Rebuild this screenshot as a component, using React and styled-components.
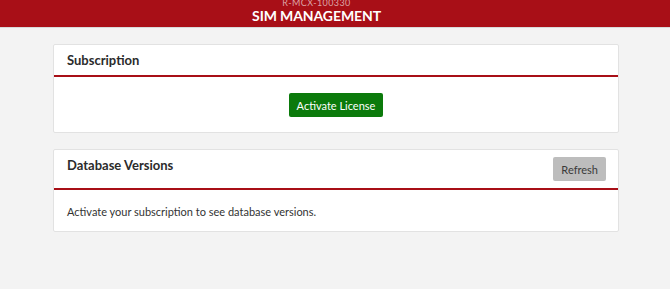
import React from 'react';
import styled, { createGlobalStyle } from 'styled-components';

const GlobalStyle = createGlobalStyle`
  body {
    margin: 0;
    background: #f3f3f3;
    font-family: Lato, 'Open Sans', sans-serif;
  }
`;

const TopBar = styled.header`
  height: 27px;
  padding-right: 37px;
  background: #a80f17;
  border-bottom: 1px solid #d9d9d9;
  display: flex;
  flex-direction: column;
  align-items: center;
  overflow: hidden;
  color: #fff;
`;

const DeviceId = styled.div`
  font-size: 9px;
  line-height: 9px;
  margin-top: -2px;
  color: #dca3a6;
  letter-spacing: 0.4px;
`;

const Title = styled.h1`
  margin: 0;
  font-size: 14px;
  line-height: 15px;
  font-weight: 700;
  margin-top: 1px;
  letter-spacing: -0.1px;
`;

const Main = styled.main`
  width: 566px;
  margin: 16px 0 0 53px;
  display: flex;
  flex-direction: column;
  gap: 16px;
`;

const Card = styled.section`
  background: #fff;
  border: 1px solid #e2e2e2;
  border-radius: 2px;
`;

const CardHead = styled.div`
  display: flex;
  justify-content: space-between;
  align-items: ${(p) => (p.$tall ? 'flex-start' : 'center')};
  height: ${(p) => (p.$tall ? '38px' : '30px')};
  padding: 0 12px 0 13px;
  border-bottom: 2px solid #a80f17;
`;

const CardTitle = styled.h2`
  margin: 0;
  font-size: 13px;
  font-weight: 700;
  color: #2b2b2b;
  padding-top: ${(p) => (p.$tall ? '7px' : '0')};
`;

const CardBody = styled.div`
  display: flex;
  justify-content: ${(p) => (p.$center ? 'center' : 'flex-start')};
  padding: ${(p) => (p.$center ? '16px 13px 15px' : '14px 13px 12px')};
`;

const Button = styled.button`
  border: none;
  border-radius: 2px;
  font-family: Lato, sans-serif;
  font-size: 11px;
  height: 24px;
  padding: 0 8px;
  background: ${(p) => (p.$variant === 'grey' ? '#bdbdbd' : '#0b7a0b')};
  color: ${(p) => (p.$variant === 'grey' ? '#3a3a3a' : '#fff')};
  margin-top: ${(p) => (p.$variant === 'grey' ? '7px' : '0')};
`;

const Message = styled.p`
  margin: 0;
  font-family: Lato, sans-serif;
  font-size: 11px;
  line-height: 15px;
  color: #333;
`;

export default function App() {
  return (
    <>
      <GlobalStyle />
      <TopBar>
        <DeviceId>R-MCX-100330</DeviceId>
        <Title>SIM MANAGEMENT</Title>
      </TopBar>
      <Main>
        <Card>
          <CardHead>
            <CardTitle>Subscription</CardTitle>
          </CardHead>
          <CardBody $center>
            <Button>Activate License</Button>
          </CardBody>
        </Card>
        <Card>
          <CardHead $tall>
            <CardTitle $tall>Database Versions</CardTitle>
            <Button $variant="grey">Refresh</Button>
          </CardHead>
          <CardBody>
            <Message>Activate your subscription to see database versions.</Message>
          </CardBody>
        </Card>
      </Main>
    </>
  );
}
